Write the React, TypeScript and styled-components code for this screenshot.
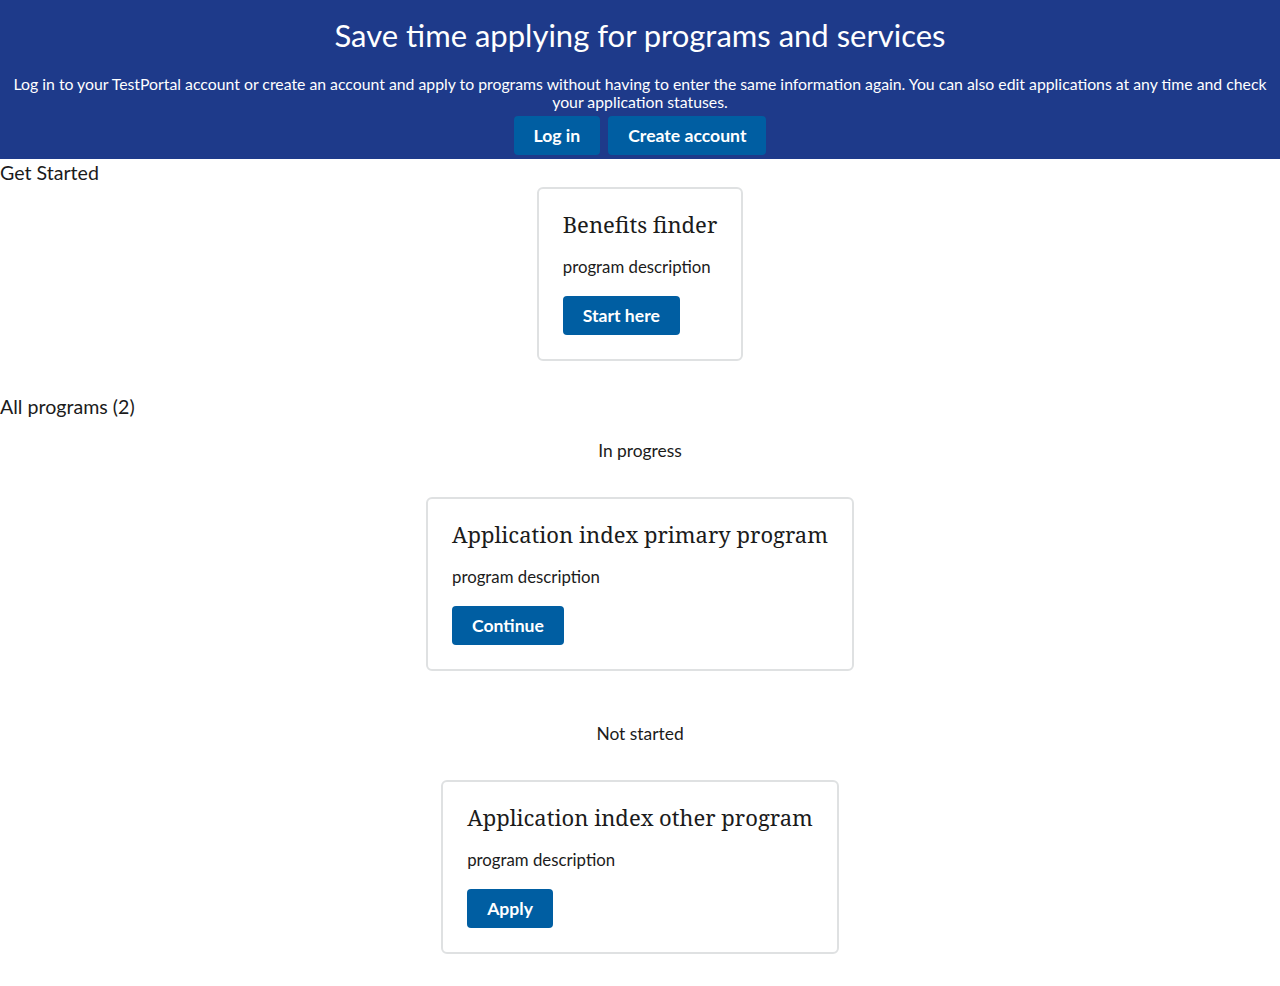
import React from "react";
import styled, { createGlobalStyle } from "styled-components";

const GlobalStyle = createGlobalStyle`
  html, body {
    margin: 0;
    padding: 0;
    background: #ffffff;
  }
  body {
    font-family: Lato, "Liberation Sans", sans-serif;
    color: #1b1b1b;
  }
  * { box-sizing: border-box; }
`;

const Page = styled.div`
  display: flex;
  flex-direction: column;
  width: 1280px;
`;

const Hero = styled.header`
  background: #1e3a8a;
  color: #ffffff;
  display: flex;
  flex-direction: column;
  align-items: center;
  text-align: center;
  padding: 15px 8px 4px;
`;

const HeroTitle = styled.h1`
  margin: 0;
  font-size: 31px;
  font-weight: 400;
  line-height: 40px;
`;

const HeroText = styled.p`
  margin: 20px 0 0;
  font-size: 15.8px;
  line-height: 18px;
`;

const ButtonRow = styled.div`
  display: flex;
  gap: 8px;
  margin-top: 5px;
`;

const Button = styled.button`
  display: inline-flex;
  align-items: center;
  justify-content: center;
  height: 39px;
  padding: 0 20px 1px;
  border: none;
  border-radius: 4px;
  background: #005ea2;
  color: #ffffff;
  font-family: Lato, "Liberation Sans", sans-serif;
  font-weight: 700;
  font-size: 17.6px;
  cursor: pointer;
`;

const Section = styled.section<{ $gapAfter?: number }>`
  display: flex;
  flex-direction: column;
  margin-bottom: ${(p) => p.$gapAfter ?? 0}px;
`;

const SectionHeading = styled.h2`
  margin: 0;
  font-size: 19.6px;
  font-weight: 400;
  line-height: 28px;
`;

const Group = styled.div`
  display: flex;
  flex-direction: column;
  align-items: center;
  padding-top: 18px;
  margin-bottom: 33px;
`;

const GroupLabel = styled.h3`
  margin: 0 0 34px;
  font-size: 17.4px;
  font-weight: 400;
  line-height: 24px;
`;

const CardWrap = styled.div`
  display: flex;
  justify-content: center;
`;

const Card = styled.div`
  display: flex;
  flex-direction: column;
  align-items: flex-start;
  padding: 24px;
  border: 2px solid #dfe1e2;
  border-radius: 6px;
  background: #ffffff;
`;

const CardTitle = styled.h4`
  margin: 0;
  font-family: "Noto Serif", "DejaVu Serif", serif;
  font-size: 22px;
  font-weight: 400;
  line-height: 23px;
  white-space: nowrap;
`;

const CardText = styled.p`
  margin: 19px 0 17px;
  font-size: 16.8px;
  line-height: 24px;
`;

type Program = { title: string; action: string };

const ProgramCard = ({ title, action }: Program) => (
  <Card>
    <CardTitle>{title}</CardTitle>
    <CardText>program description</CardText>
    <Button>{action}</Button>
  </Card>
);

export default function App() {
  return (
    <>
      <GlobalStyle />
      <Page>
        <Hero>
          <HeroTitle>Save time applying for programs and services</HeroTitle>
          <HeroText>
            Log in to your TestPortal account or create an account and apply to programs without
            having to enter the same information again. You can also edit applications at any time
            and check your application statuses.
          </HeroText>
          <ButtonRow>
            <Button>Log in</Button>
            <Button>Create account</Button>
          </ButtonRow>
        </Hero>

        <Section $gapAfter={32}>
          <SectionHeading>Get Started</SectionHeading>
          <CardWrap>
            <ProgramCard title="Benefits finder" action="Start here" />
          </CardWrap>
        </Section>

        <Section>
          <SectionHeading>All programs (2)</SectionHeading>
          <Group>
            <GroupLabel>In progress</GroupLabel>
            <ProgramCard title="Application index primary program" action="Continue" />
          </Group>
          <Group>
            <GroupLabel>Not started</GroupLabel>
            <ProgramCard title="Application index other program" action="Apply" />
          </Group>
        </Section>
      </Page>
    </>
  );
}
